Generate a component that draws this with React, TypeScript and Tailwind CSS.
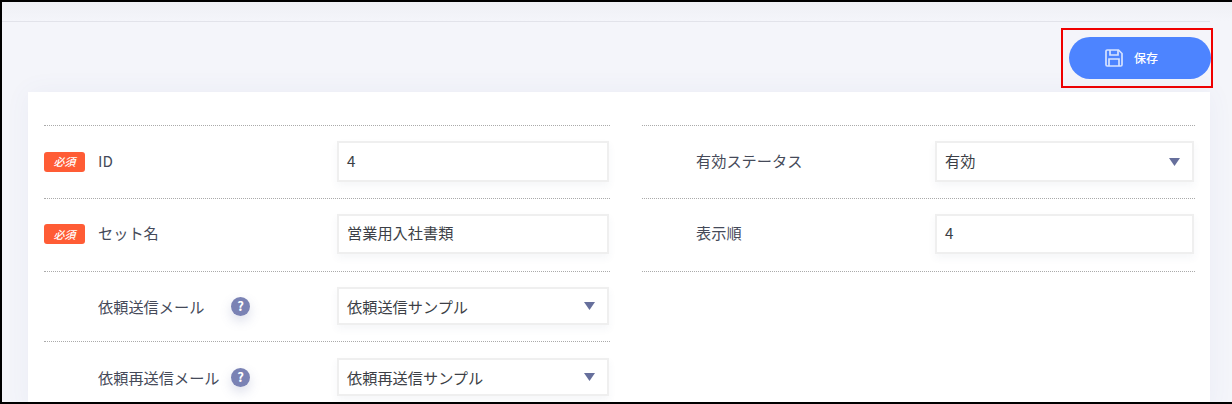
const font = { fontFamily: '"Noto Sans CJK JP", "Noto Sans", sans-serif' };

function Required() {
  return (
    <span className="w-[41px] h-[20px] rounded-[3px] bg-[#ff5c35] text-white text-[11px] font-medium italic flex items-center justify-center shrink-0">
      必須
    </span>
  );
}

function Help() {
  return (
    <span className="absolute left-[187px] w-[19px] h-[19px] rounded-full bg-[#7a82b4] text-white text-[13px] font-bold flex items-center justify-center shadow-[0_5px_12px_rgba(90,100,160,0.22)]">
      ?
    </span>
  );
}

function Caret() {
  return (
    <svg width="11" height="8" viewBox="0 0 11 8" className="shrink-0">
      <path d="M0 0h11L5.5 8z" fill="#666f9c" />
    </svg>
  );
}

function Field({ value, select, h, lift }: { value: string; select?: boolean; h: string; lift?: boolean }) {
  return (
    <div className={`${h} flex-1 mr-px bg-white border-2 border-[#efefef] shadow-[0_4px_8px_rgba(60,70,110,0.05)] flex items-center justify-between pl-[8px] pr-[12px] text-[15.2px] text-[#3c3f46]`}>
      <span className={lift ? 'pb-[3px]' : ''}>{value}</span>
      {select && <Caret />}
    </div>
  );
}

type RowProps = {
  label: string;
  value: string;
  required?: boolean;
  help?: boolean;
  select?: boolean;
  lift?: boolean;
  rowH: string;
  fieldH: string;
};

function Row({ label, value, required, help, select, lift, rowH, fieldH }: RowProps) {
  return (
    <div className={`${rowH} border-t border-dotted border-[#aaa] flex items-start`}>
      <div className={`${fieldH} w-[293px] shrink-0 relative flex items-center text-[15.2px] text-[#454a59]`}>
        {required ? <Required /> : <span className="w-[41px] shrink-0" />}
        <span className={lift ? 'ml-[13px] pb-[3px]' : 'ml-[13px]'}>{label}</span>
        {help && <Help />}
      </div>
      <Field value={value} select={select} h={fieldH} lift={lift} />
    </div>
  );
}

export default function App() {
  return (
    <div style={font} className="h-[404px] w-[1232px] overflow-hidden bg-[#f4f5fa] border-t-2 border-l-2 border-b-2 border-black flex flex-col">
      <div className="h-[19px] shrink-0 bg-gradient-to-b from-[#eff0f5] to-[#f4f5fa]" />
      <div className="mr-[22px] h-px bg-[#e2e3ea] shrink-0" />
      <div className="h-[70px] shrink-0 mr-[19px] flex justify-end items-start pt-[6px]">
        <div className="w-[152px] h-[60px] border-2 border-[#f00000] flex items-center pl-[6px]">
          <button className="w-[142px] h-[42px] rounded-full bg-[#4d84ff] flex items-center pl-[36px] gap-[11px] text-white text-[12px] font-medium">
            <svg width="18" height="18" viewBox="0 0 18 18" fill="none" stroke="#d6e2ff" strokeWidth="1.7">
              <path d="M1 2.2A1.2 1.2 0 0 1 2.200 1h11.300L17 4.500v11.300a1.200 1.200 0 0 1-1.200 1.200H2.200A1.200 1.200 0 0 1 1 15.800z" />
              <path d="M5 1v5h8V1M4 17v-7h10v7" />
            </svg>
            <span>保存</span>
          </button>
        </div>
      </div>
      <div className="ml-[26px] mr-[22px] flex-1 bg-white shadow-[0_0_24px_rgba(90,100,170,0.06)] pt-[33px] px-[16px] grid grid-cols-[566px_553px] gap-x-[32px] content-start">
        <div>
          <Row label="ID" value="4" required lift rowH="h-[73px] pt-[15px]" fieldH="h-[41px]" />
          <Row label="セット名" value="営業用入社書類" required lift rowH="h-[73px] pt-[15px]" fieldH="h-[40px]" />
          <Row label="依頼送信メール" value="依頼送信サンプル" help select rowH="h-[70px] pt-[15px]" fieldH="h-[38px]" />
          <Row label="依頼再送信メール" value="依頼再送信サンプル" help select rowH="h-[70px] pt-[16px]" fieldH="h-[38px]" />
        </div>
        <div>
          <Row label="有効ステータス" value="有効" select lift rowH="h-[73px] pt-[15px]" fieldH="h-[41px]" />
          <Row label="表示順" value="4" lift rowH="h-[73px] pt-[15px]" fieldH="h-[40px]" />
          <div className="border-t border-dotted border-[#aaa]" />
        </div>
      </div>
    </div>
  );
}
